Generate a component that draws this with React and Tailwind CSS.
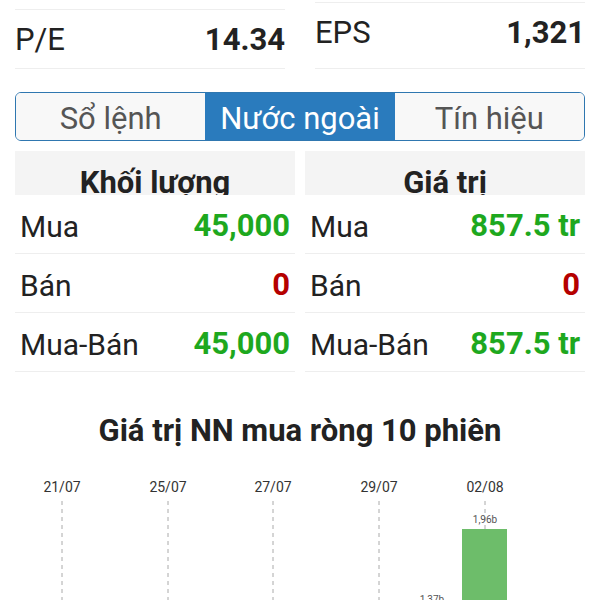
import React from "react";

const rowsLeft = [
  { label: "Mua", value: "45,000", color: "text-[#1ea81e]" },
  { label: "Bán", value: "0", color: "text-[#b50000]" },
  { label: "Mua-Bán", value: "45,000", color: "text-[#1ea81e]" },
];

const rowsRight = [
  { label: "Mua", value: "857.5 tr", color: "text-[#1ea81e]" },
  { label: "Bán", value: "0", color: "text-[#b50000]" },
  { label: "Mua-Bán", value: "857.5 tr", color: "text-[#1ea81e]" },
];

const dates = [
  { x: 62, label: "21/07" },
  { x: 168, label: "25/07" },
  { x: 273, label: "27/07" },
  { x: 379, label: "29/07" },
  { x: 485, label: "02/08" },
];

function Column({ title, rows }) {
  return (
    <div className="flex flex-col">
      {/* header, text is cut off at the bottom */}
      <div className="h-[44px] bg-[#f4f4f4] overflow-hidden text-center">
        <div className="pt-[14px] text-[31px] leading-[36px] font-bold text-[#222]">{title}</div>
      </div>
      {rows.map((r) => (
        <div
          key={r.label}
          className="h-[59px] flex items-center justify-between px-[5px] pt-[5px] border-b border-[#eeeeee]"
        >
          <span className="text-[30px] text-[#222]">{r.label}</span>
          <span className={`text-[31px] font-bold ${r.color}`}>{r.value}</span>
        </div>
      ))}
    </div>
  );
}

function Chart() {
  return (
    <svg width="600" height="152" className="block">
      {dates.map((d) => (
        <g key={d.label}>
          <text
            x={d.x}
            y={43}
            textAnchor="middle"
            fontSize="14"
            fill="#333"
            fontFamily="Roboto, sans-serif"
          >
            {d.label}
          </text>
          <line x1={d.x} y1={52} x2={d.x} y2={152} stroke="#aaa" strokeWidth="1" strokeDasharray="4 4" />
        </g>
      ))}
      <rect x="462" y="80" width="45" height="72" fill="#6dbd6a" />
      <text x="485" y="74" textAnchor="middle" fontSize="10" fill="#555" fontFamily="Roboto, sans-serif">
        1,96b
      </text>
      <text x="432" y="154" textAnchor="middle" fontSize="10" fill="#555" fontFamily="Roboto, sans-serif">
        1,37b
      </text>
    </svg>
  );
}

export default function App() {
  return (
    <div className="w-[600px] h-[600px] overflow-hidden bg-white font-['Roboto',sans-serif]">
      {/* P/E and EPS */}
      <div className="grid grid-cols-2 gap-[30px] px-[15px] items-end">
        <div className="h-[60px] border-y border-[#eeeeee] flex items-center justify-between pt-[2px]">
          <span className="text-[31px] text-[#222]">P/E</span>
          <span className="text-[31px] font-bold text-[#222]">14.34</span>
        </div>
        <div className="mt-[2px] h-[67px] border-y border-[#eeeeee] flex items-center justify-between pb-[4px]">
          <span className="text-[31px] text-[#222]">EPS</span>
          <span className="text-[31px] font-bold text-[#222]">1,321</span>
        </div>
      </div>

      {/* Tabs */}
      <div className="mx-[15px] mt-[23px] h-[49px] grid grid-cols-3 border-[1.5px] border-[#2f77b0] rounded-[6px] overflow-hidden">
        <div className="bg-[#f8f8f8] flex items-center justify-center pt-[3px] text-[31px] text-[#555]">Sổ lệnh</div>
        <div className="bg-[#2a7bbd] flex items-center justify-center pt-[3px] text-[31px] text-white">Nước ngoài</div>
        <div className="bg-[#f8f8f8] flex items-center justify-center pt-[3px] text-[31px] text-[#555]">Tín hiệu</div>
      </div>

      {/* Khối lượng / Giá trị */}
      <div className="grid grid-cols-2 gap-[10px] px-[15px] mt-[10px]">
        <Column title="Khối lượng" rows={rowsLeft} />
        <Column title="Giá trị" rows={rowsRight} />
      </div>

      {/* Chart */}
      <div className="mt-[41px] text-center text-[31px] leading-[36px] font-bold text-[#222]">
        Giá trị NN mua ròng 10 phiên
      </div>
      <Chart />
    </div>
  );
}
